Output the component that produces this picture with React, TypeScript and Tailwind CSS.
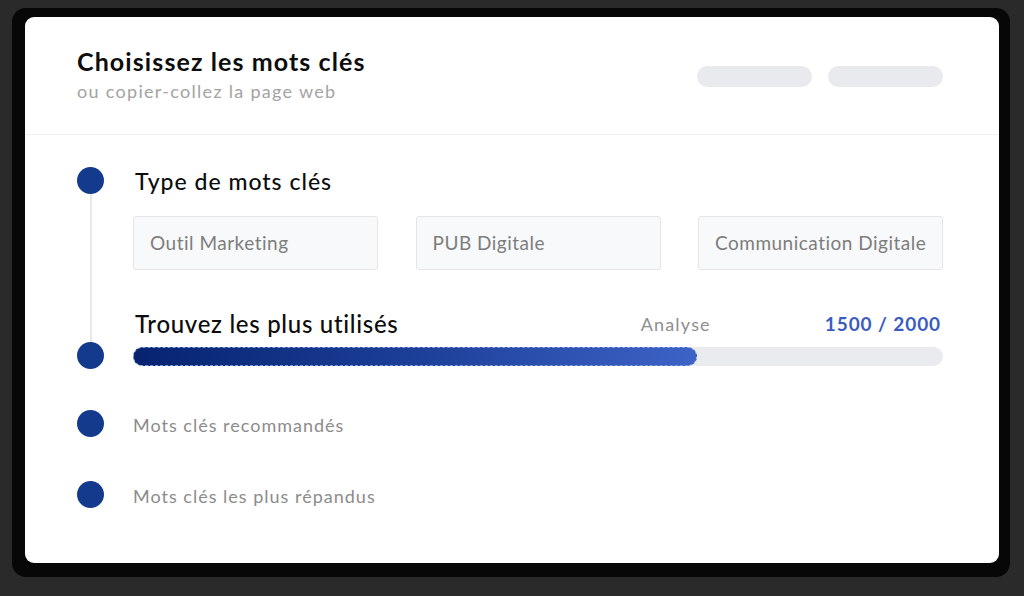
import React from "react";

const font = { fontFamily: "Lato, 'Noto Sans', sans-serif" };

function Dot() {
  return <div className="w-[27px] h-[27px] rounded-full bg-[#143a8e] shrink-0" />;
}

function KeywordBox({ label }: { label: string }) {
  return (
    <div className="w-[245px] h-[54px] flex items-center pl-[16px] bg-[#f8f9fa] border border-[#e3e5e8] rounded-[3px] text-[19px] tracking-[0.5px] text-[#7d7d7d]">
      {label}
    </div>
  );
}

export default function App() {
  return (
    <div style={font} className="w-[1024px] h-[596px] bg-[#2a2a2a] pt-[8px] pl-[12px] pr-[14px] pb-[19px]">
      <div className="w-full h-full bg-[#070707] rounded-[14px] pt-[9px] pl-[13px] pr-[11px] pb-[14px]">
        <div className="w-full h-full bg-white rounded-[9px] flex flex-col overflow-hidden">
          {/* Header */}
          <div className="h-[118px] shrink-0 border-b border-[#f0f1f3] flex items-center justify-between pl-[52px] pr-[56px]">
            <div className="flex flex-col pb-[3px]">
              <div className="text-[25px] leading-[30px] font-bold text-[#0d0d0d] tracking-[1.1px]">Choisissez les mots clés</div>
              <div className="text-[18px] leading-[24px] text-[#a3a3a3] tracking-[1.3px] mt-[3px]">ou copier-collez la page web</div>
            </div>
            <div className="flex gap-[16px] pt-[2px]">
              <div className="w-[115px] h-[21px] rounded-full bg-[#e8eaed]" />
              <div className="w-[115px] h-[21px] rounded-full bg-[#e8eaed]" />
            </div>
          </div>

          {/* Body */}
          <div className="flex pl-[52px] pr-[56px]">
            {/* Timeline */}
            <div className="w-[27px] flex flex-col items-center pt-[32px]">
              <Dot />
              <div className="w-[2px] h-[148px] bg-[#e6e8eb]" />
              <Dot />
              <div className="h-[41px]" />
              <Dot />
              <div className="h-[44px]" />
              <Dot />
            </div>

            {/* Content */}
            <div className="flex-1 ml-[29px] flex flex-col pt-[32px]">
              <div className="h-[28px] flex items-center pl-[2px] text-[23px] tracking-[1px] font-medium text-[#0d0d0d]">Type de mots clés</div>
              <div className="flex justify-between mt-[21px]">
                <KeywordBox label="Outil Marketing" />
                <KeywordBox label="PUB Digitale" />
                <KeywordBox label="Communication Digitale" />
              </div>

              <div className="h-[28px] flex items-center mt-[40px]">
                <div className="pl-[2px] text-[24px] tracking-[0.7px] font-medium text-[#0d0d0d] flex-1">Trouvez les plus utilisés</div>
                <div className="text-[18px] tracking-[1.2px] text-[#8e8e8e] mr-[114px]">Analyse</div>
                <div className="text-[19px] tracking-[0.9px] font-bold text-[#3a5cc2] pr-[2px]">1500 / 2000</div>
              </div>
              <div className="mt-[9px] h-[19px] rounded-full bg-[#e9ebee]">
                <div className="h-full w-[564px] rounded-full bg-gradient-to-r from-[#062370] via-[#1c3f98] to-[#3d63c7] border border-dashed border-[#7f9bd6]" />
              </div>

              <div className="h-[28px] flex items-center mt-[45px] text-[18px] tracking-[1px] text-[#8c8c8c]">Mots clés recommandés</div>
              <div className="h-[28px] flex items-center mt-[43px] text-[18px] tracking-[1px] text-[#8c8c8c]">Mots clés les plus répandus</div>
            </div>
          </div>
        </div>
      </div>
    </div>
  );
}
